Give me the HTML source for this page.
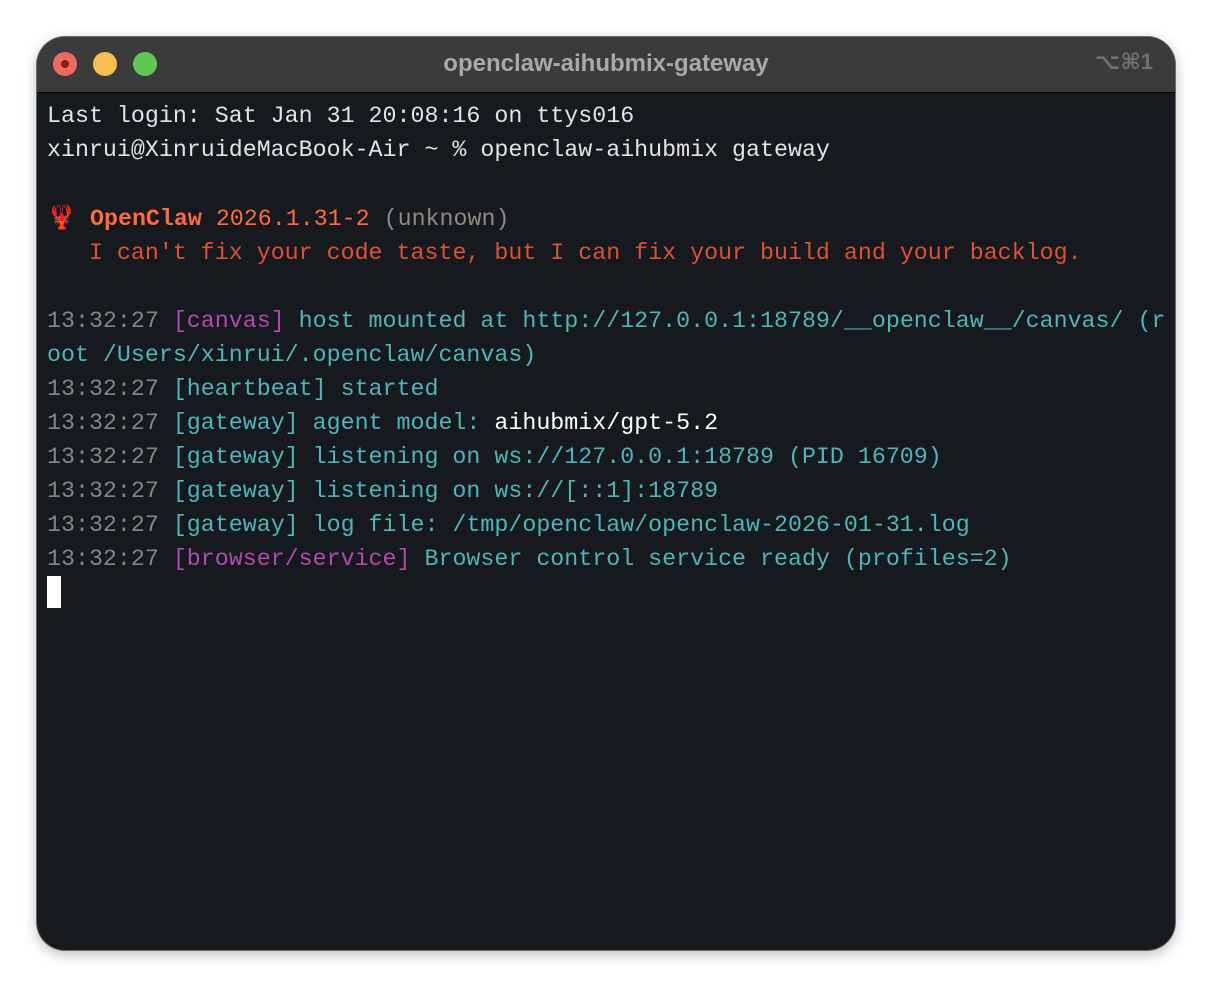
<!DOCTYPE html>
<html><head><meta charset="utf-8"><style>
html,body{margin:0;padding:0;background:#fff;width:1212px;height:988px;overflow:hidden}
.win{position:absolute;left:37px;top:37px;width:1138px;height:913px;border-radius:28px;background:#16191d;overflow:hidden;box-shadow:0 0 0 1px #6a6a6a,0 4px 14px rgba(0,0,0,.28)}
.tb{position:absolute;left:0;top:0;width:100%;height:55px;background:#3a3b3b;border-bottom:1px solid #000}
.dot{position:absolute;top:15px;width:24px;height:24px;border-radius:50%}
.title{position:absolute;left:0;right:0;top:0;font:bold 24px "Liberation Sans",sans-serif;line-height:53px;text-align:center;color:#a9a9a9}
.kb{position:absolute;right:22px;top:0;font:bold 22px "Liberation Sans","DejaVu Sans",sans-serif;line-height:50px;color:#707070}
.term{position:absolute;left:10px;top:62px;font-family:"Liberation Mono",monospace;font-size:23.3px;line-height:34px;color:#e3e3e3;white-space:pre}
.g{color:#858585}.c{color:#4db6b8}.m{color:#b24aae}.o{color:#ff6b3c}.r{color:#dc5234}.w{color:#fff}.u{color:#8f8a85}
.cur{display:inline-block;width:14px;height:32px;background:#fff;vertical-align:-7px}
</style></head><body>
<div class="win">
<div class="tb">
<div class="dot" style="left:16px;background:#ee6a5e"><div style="position:absolute;left:8px;top:8px;width:8px;height:8px;border-radius:50%;background:#8e1c14"></div></div>
<div class="dot" style="left:56px;background:#f5bf4f"></div>
<div class="dot" style="left:96px;background:#61c554"></div>
<div class="title">openclaw-aihubmix-gateway</div>
<div class="kb">⌥⌘1</div>
</div>
<div class="term">Last login: Sat Jan 31 20:08:16 on ttys016
xinrui@XinruideMacBook-Air ~ % openclaw-aihubmix gateway

<span style="font-family:'DejaVu Sans',sans-serif;color:#e2442a">🦞</span> <b class="o">OpenClaw</b> <span class="o">2026.1.31-2</span> <span class="u">(unknown)</span>
   <span class="r">I can't fix your code taste, but I can fix your build and your backlog.</span>

<span class="g">13:32:27</span> <span class="m">[canvas]</span> <span class="c">host mounted at http://127.0.0.1:18789/__openclaw__/canvas/ (r
oot /Users/xinrui/.openclaw/canvas)</span>
<span class="g">13:32:27</span> <span class="c">[heartbeat] started</span>
<span class="g">13:32:27</span> <span class="c">[gateway] agent model: </span><span class="w">aihubmix/gpt-5.2</span>
<span class="g">13:32:27</span> <span class="c">[gateway] listening on ws://127.0.0.1:18789 (PID 16709)</span>
<span class="g">13:32:27</span> <span class="c">[gateway] listening on ws://[::1]:18789</span>
<span class="g">13:32:27</span> <span class="c">[gateway] log file: /tmp/openclaw/openclaw-2026-01-31.log</span>
<span class="g">13:32:27</span> <span class="m">[browser/service]</span> <span class="c">Browser control service ready (profiles=2)</span>
<span class="cur"></span></div>
</div>
</body></html>
